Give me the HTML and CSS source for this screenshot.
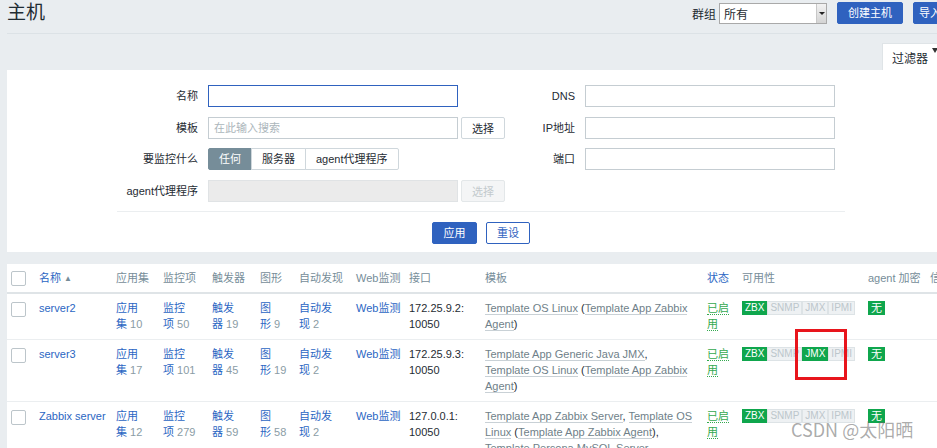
FILE: index.html
```html
<!DOCTYPE html>
<html lang="zh-CN">
<head>
<meta charset="utf-8">
<title>主机</title>
<link rel="stylesheet" href="styles.css">
</head>
<body>
<div class="page">
  <header class="page-header">
    <h1 class="title">主机</h1>
    <div class="controls">
      <span class="ctl-label">群组</span>
      <div class="select"><span class="select-text">所有</span><span class="select-arrow"></span></div>
      <button class="btn">创建主机</button>
      <button class="btn btn-import">导入</button>
    </div>
  </header>

  <div class="filter-tabs">
    <div class="filter-tab">过滤器<span class="tab-icon"></span></div>
  </div>

  <section class="filter">
    <div class="filter-forms">
      <div class="form-grid form-left">
        <label class="f-label">名称</label>
        <div class="field"><input class="input input-focus" type="text"></div>

        <label class="f-label">模板</label>
        <div class="field"><input class="input" type="text" placeholder="在此输入搜索"><button class="btn-sel">选择</button></div>

        <label class="f-label">要监控什么</label>
        <div class="field segmented">
          <span class="seg seg-on">任何</span><span class="seg">服务器</span><span class="seg">agent代理程序</span>
        </div>

        <label class="f-label">agent代理程序</label>
        <div class="field"><input class="input input-disabled" type="text" disabled><button class="btn-sel btn-sel-disabled">选择</button></div>
      </div>

      <div class="form-grid form-right">
        <label class="f-label">DNS</label>
        <div class="field"><input class="input" type="text"></div>

        <label class="f-label">IP地址</label>
        <div class="field"><input class="input" type="text"></div>

        <label class="f-label">端口</label>
        <div class="field"><input class="input" type="text"></div>
      </div>
    </div>
    <div class="filter-buttons">
      <button class="btn btn-apply">应用</button>
      <button class="btn btn-alt">重设</button>
    </div>
  </section>

  <section class="list">
    <table class="hosts">
      <colgroup>
        <col class="c-check"><col class="c-name"><col class="c-apps"><col class="c-items"><col class="c-trig">
        <col class="c-graph"><col class="c-disc"><col class="c-web"><col class="c-iface"><col class="c-tpl">
        <col class="c-status"><col class="c-avail"><col class="c-enc"><col class="c-info">
      </colgroup>
      <thead>
        <tr>
          <th class="cell-check"><span class="checkbox"></span></th>
          <th><a class="link">名称</a><span class="sort-arrow">▲</span></th>
          <th>应用集</th>
          <th>监控项</th>
          <th>触发器</th>
          <th>图形</th>
          <th>自动发现</th>
          <th>Web监测</th>
          <th>接口</th>
          <th>模板</th>
          <th><a class="link">状态</a></th>
          <th>可用性</th>
          <th>agent 加密</th>
          <th>信息</th>
        </tr>
      </thead>
      <tbody>
        <tr>
          <td class="cell-check"><span class="checkbox"></span></td>
          <td><a class="link">server2</a></td>
          <td><a class="link">应用<br>集</a> <span class="count">10</span></td>
          <td><a class="link">监控<br>项</a> <span class="count">50</span></td>
          <td><a class="link">触发<br>器</a> <span class="count">19</span></td>
          <td><a class="link">图<br>形</a> <span class="count">9</span></td>
          <td><a class="link">自动发<br>现</a> <span class="count">2</span></td>
          <td><a class="link">Web监测</a></td>
          <td>172.25.9.2:<br>10050</td>
          <td><a class="tpl">Template OS Linux</a> (<a class="tpl">Template App Zabbix<br>Agent</a>)</td>
          <td><a class="status-on">已启<br>用</a></td>
          <td><span class="avail"><span class="b b-on">ZBX</span><span class="b">SNMP</span><span class="b">JMX</span><span class="b">IPMI</span></span></td>
          <td><span class="b b-on b-cjk">无</span></td>
          <td></td>
        </tr>
        <tr>
          <td class="cell-check"><span class="checkbox"></span></td>
          <td><a class="link">server3</a></td>
          <td><a class="link">应用<br>集</a> <span class="count">17</span></td>
          <td><a class="link">监控<br>项</a> <span class="count">101</span></td>
          <td><a class="link">触发<br>器</a> <span class="count">45</span></td>
          <td><a class="link">图<br>形</a> <span class="count">19</span></td>
          <td><a class="link">自动发<br>现</a> <span class="count">2</span></td>
          <td><a class="link">Web监测</a></td>
          <td>172.25.9.3:<br>10050</td>
          <td><a class="tpl">Template App Generic Java JMX</a>,<br><a class="tpl">Template OS Linux</a> (<a class="tpl">Template App Zabbix<br>Agent</a>)</td>
          <td><a class="status-on">已启<br>用</a></td>
          <td><span class="avail"><span class="b b-on">ZBX</span><span class="b">SNMP</span><span class="b b-on">JMX</span><span class="b">IPMI</span></span></td>
          <td><span class="b b-on b-cjk">无</span></td>
          <td></td>
        </tr>
        <tr>
          <td class="cell-check"><span class="checkbox"></span></td>
          <td><a class="link">Zabbix server</a></td>
          <td><a class="link">应用<br>集</a> <span class="count">12</span></td>
          <td><a class="link">监控<br>项</a> <span class="count">279</span></td>
          <td><a class="link">触发<br>器</a> <span class="count">59</span></td>
          <td><a class="link">图<br>形</a> <span class="count">58</span></td>
          <td><a class="link">自动发<br>现</a> <span class="count">2</span></td>
          <td><a class="link">Web监测</a></td>
          <td>127.0.0.1:<br>10050</td>
          <td><a class="tpl">Template App Zabbix Server</a>, <a class="tpl">Template OS<br>Linux</a> (<a class="tpl">Template App Zabbix Agent</a>),<br><a class="tpl">Template Percona MySQL Server</a></td>
          <td><a class="status-on">已启<br>用</a></td>
          <td><span class="avail"><span class="b b-on">ZBX</span><span class="b">SNMP</span><span class="b">JMX</span><span class="b">IPMI</span></span></td>
          <td><span class="b b-on b-cjk">无</span></td>
          <td></td>
        </tr>
      </tbody>
    </table>
  </section>
</div>

<div class="highlight"></div>
<div class="watermark">CSDN @太阳晒</div>
</body>
</html>
```

FILE: styles.css
```css
html, body {
  margin: 0;
  padding: 0;
}

body {
  position: relative;
  width: 937px;
  height: 448px;
  overflow: hidden;
  background: #e9edf0;
  font-family: "Liberation Sans", "Noto Sans CJK SC", sans-serif;
  font-size: 11px;
  color: #1f2c33;
}

.page {
  width: 948px;
  margin-left: 7px;
}

/* Header */
.page-header {
  display: flex;
  align-items: center;
  height: 22px;
  padding: 2px 0 9px;
  border-bottom: 1px solid #dce2e6;
}

.title {
  margin: 0;
  font-size: 19px;
  line-height: 22px;
  font-weight: normal;
  color: #1f2c33;
}

.controls {
  margin-left: auto;
  display: flex;
  align-items: center;
}

.ctl-label {
  margin-right: 3px;
  font-size: 12px;
}

.select {
  display: flex;
  align-items: center;
  box-sizing: border-box;
  width: 108px;
  height: 21px;
  border: 1px solid #a9a9a9;
  background: #fff;
  margin-right: 10px;
  font-size: 12px;
}

.select-text {
  flex: 1;
  padding-left: 4px;
}

.select-arrow {
  position: relative;
  width: 9px;
  height: 19px;
  background: linear-gradient(#f2f2f2, #d4d4d4);
  border-left: 1px solid #c8c8c8;
}

.select-arrow::after {
  content: "";
  position: absolute;
  left: 2px;
  top: 8px;
  border-left: 3px solid transparent;
  border-right: 3px solid transparent;
  border-top: 3px solid #222;
}

.btn {
  box-sizing: border-box;
  height: 22px;
  padding: 0 10px;
  border: 1px solid #2f62bf;
  border-radius: 2px;
  background: #2f62bf;
  color: #fff;
  font-family: inherit;
  font-size: 11px;
  line-height: 20px;
}

.controls .btn {
  width: 66px;
  padding: 0;
}

.controls .btn + .btn {
  margin-left: 10px;
}

.controls .btn-import {
  width: 42px;
  padding-left: 5px;
  text-align: left;
}

/* Filter tab */
.filter-tabs {
  display: flex;
  justify-content: flex-end;
  margin-top: 9px;
}

.filter-tab {
  display: flex;
  align-items: center;
  box-sizing: border-box;
  width: 73px;
  height: 27px;
  padding-left: 9px;
  background: #fff;
  border: 1px solid #dfe4e7;
  border-bottom: none;
  color: #1f2c33;
  font-size: 12px;
}

.tab-icon {
  align-self: flex-start;
  margin-top: 4px;
  margin-left: 4px;
  border-left: 3px solid transparent;
  border-right: 3px solid transparent;
  border-top: 5px solid #333;
}

/* Filter panel */
.filter {
  background: #fff;
  padding: 15px 0 8px;
}

.filter-forms {
  display: flex;
  box-sizing: border-box;
  width: 728px;
  margin: 0 auto;
  padding: 0 10px 9px 0;
  border-bottom: 1px solid #ebeef0;
}

.form-grid {
  display: grid;
  column-gap: 10px;
  row-gap: 9.67px;
  align-items: center;
  align-content: start;
}

.form-left {
  grid-template-columns: 81px 297px;
}

.form-right {
  grid-template-columns: 70px 250px;
}

.f-label {
  text-align: right;
  line-height: 22px;
  white-space: nowrap;
}

.field {
  display: flex;
  gap: 3px;
  height: 22px;
}

.input {
  box-sizing: border-box;
  width: 250px;
  height: 22px;
  margin: 0;
  padding: 0 5px;
  border: 1px solid #c5cdd2;
  border-radius: 0;
  background: #fff;
  font-family: inherit;
  font-size: 11px;
  color: #1f2c33;
  outline: none;
}

.input::placeholder {
  color: #acb6bb;
}

.input-focus {
  border-color: #2f62bf;
}

.input-disabled {
  background: #ebebeb;
  border-color: #e0e3e5;
}

.btn-sel {
  box-sizing: border-box;
  width: 44px;
  height: 22px;
  padding: 0;
  border: 1px solid #cfd7dc;
  border-radius: 2px;
  background: #fff;
  color: #1f2c33;
  font-family: inherit;
  font-size: 11px;
}

.btn-sel-disabled {
  background: #f4f5f6;
  border-color: #e3e7e9;
  color: #c3cacd;
}

.segmented {
  gap: 0;
}

.seg {
  box-sizing: border-box;
  height: 22px;
  padding: 0 10px;
  border: 1px solid #cfd7dc;
  margin-left: -1px;
  background: #fff;
  line-height: 20px;
  white-space: nowrap;
}

.seg:first-child {
  margin-left: 0;
  border-radius: 2px 0 0 2px;
}

.seg:last-child {
  border-radius: 0 2px 2px 0;
}

.seg-on {
  background: #768d99;
  border-color: #768d99;
  color: #fff;
}

.filter-buttons {
  display: flex;
  justify-content: center;
  gap: 9px;
  margin-top: 10px;
}

.btn-apply {
  width: 45px;
  padding: 0;
}

.btn-alt {
  width: 44px;
  padding: 0;
  background: #fff;
  color: #2f62bf;
}

/* Host list */
.list {
  margin-top: 12px;
  background: #fff;
  overflow: hidden;
}

.hosts {
  width: 983px;
  table-layout: fixed;
  border-collapse: collapse;
}

.c-check { width: 32px; }
.c-name { width: 77px; }
.c-apps { width: 47px; }
.c-items { width: 49px; }
.c-trig { width: 48px; }
.c-graph { width: 39px; }
.c-disc { width: 57px; }
.c-web { width: 53px; }
.c-iface { width: 76px; }
.c-tpl { width: 222px; }
.c-status { width: 35px; }
.c-avail { width: 126px; }
.c-enc { width: 62px; }
.c-info { width: 60px; }

.hosts th {
  padding: 6px 0 5px;
  border-bottom: 2px solid #dfe4e7;
  text-align: left;
  font-weight: normal;
  line-height: 16px;
  color: #768d99;
  white-space: nowrap;
  vertical-align: middle;
}

.hosts td {
  padding: 6px 0 7px;
  border-bottom: 1px solid #ebeef0;
  line-height: 16px;
  white-space: nowrap;
  vertical-align: top;
}

.hosts .cell-check {
  padding-left: 4px;
}

.checkbox {
  display: block;
  box-sizing: border-box;
  width: 15px;
  height: 15px;
  border: 1px solid #bcc5ca;
  border-radius: 2px;
  background: #fff;
}

.hosts td .checkbox {
  margin-top: 2px;
}

.link {
  color: #2b66c3;
  text-decoration: none;
}

.sort-arrow {
  margin-left: 3px;
  font-size: 8px;
  color: #768d99;
  vertical-align: 1px;
}

.count {
  color: #8a9ca5;
}

.tpl {
  color: #6f7f89;
  text-decoration: none;
  border-bottom: 1px solid #c9d1d6;
}

.status-on {
  color: #33a94f;
  text-decoration: none;
  border-bottom: 1px dotted #33a94f;
}

.avail {
  display: inline-flex;
  margin-top: 1px;
  vertical-align: top;
}

.b {
  display: inline-block;
  height: 14px;
  box-sizing: border-box;
  padding: 0 2px;
  border: 1px solid #dde3e6;
  background: #eef1f3;
  color: #bcc6cb;
  font-size: 10px;
  line-height: 12px;
}

.b-on {
  background: #0fa64d;
  border-color: #0fa64d;
  color: #fff;
}

.b-cjk {
  margin-top: 1px;
  padding: 0 2px;
  font-size: 11px;
  vertical-align: top;
}

/* Annotation overlays */
.highlight {
  position: absolute;
  left: 795px;
  top: 329px;
  width: 52px;
  height: 51px;
  box-sizing: border-box;
  border: 3px solid #e8151c;
}

.watermark {
  position: absolute;
  left: 791px;
  top: 418px;
  font-family: "Noto Sans CJK SC", sans-serif;
  font-size: 18px;
  line-height: 22px;
  color: rgba(100, 100, 100, 0.55);
  white-space: nowrap;
}
```
